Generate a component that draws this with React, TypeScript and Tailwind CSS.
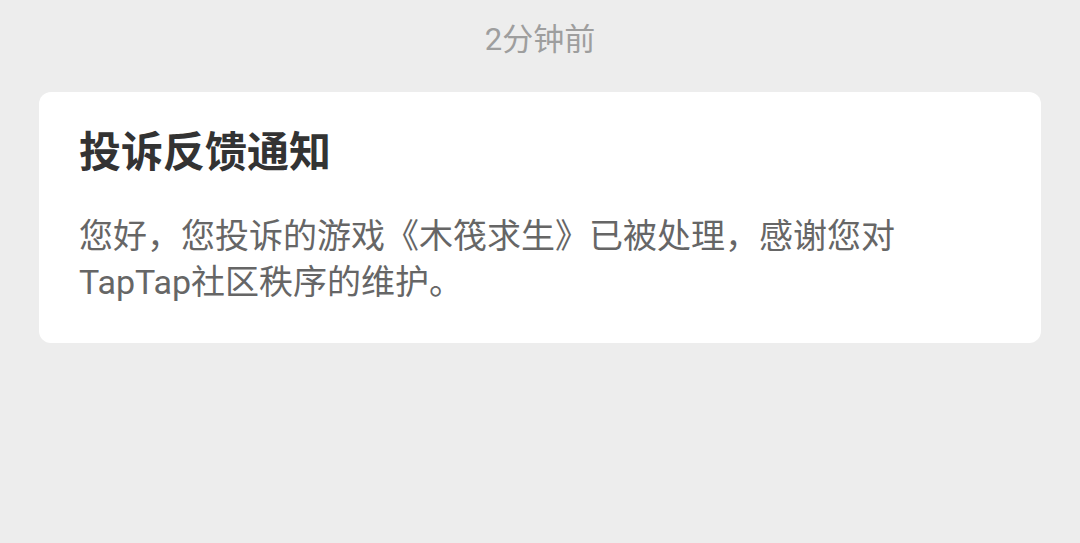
export default function App() {
  return (
    <div
      className="min-h-[543px] w-full bg-[#ededed] px-[39px]"
      style={{ fontFamily: 'Roboto, "Noto Sans CJK SC", sans-serif' }}
    >
      {/* timestamp */}
      <div className="flex h-[92px] items-start justify-center pt-[20px]">
        <span className="text-[31px] leading-[40px] text-[#9e9e9e]">2分钟前</span>
      </div>

      {/* notification card */}
      <div className="rounded-[12px] bg-white px-[40px] pt-[40px] pb-[38px]">
        <h2 className="text-[42px] leading-[42px] font-bold text-[#333333]">投诉反馈通知</h2>
        <p className="mt-[39px] text-[34px] leading-[46px] text-[#666666]">
          您好，您投诉的游戏《木筏求生》已被处理，感谢您对TapTap社区秩序的维护。
        </p>
      </div>
    </div>
  );
}
